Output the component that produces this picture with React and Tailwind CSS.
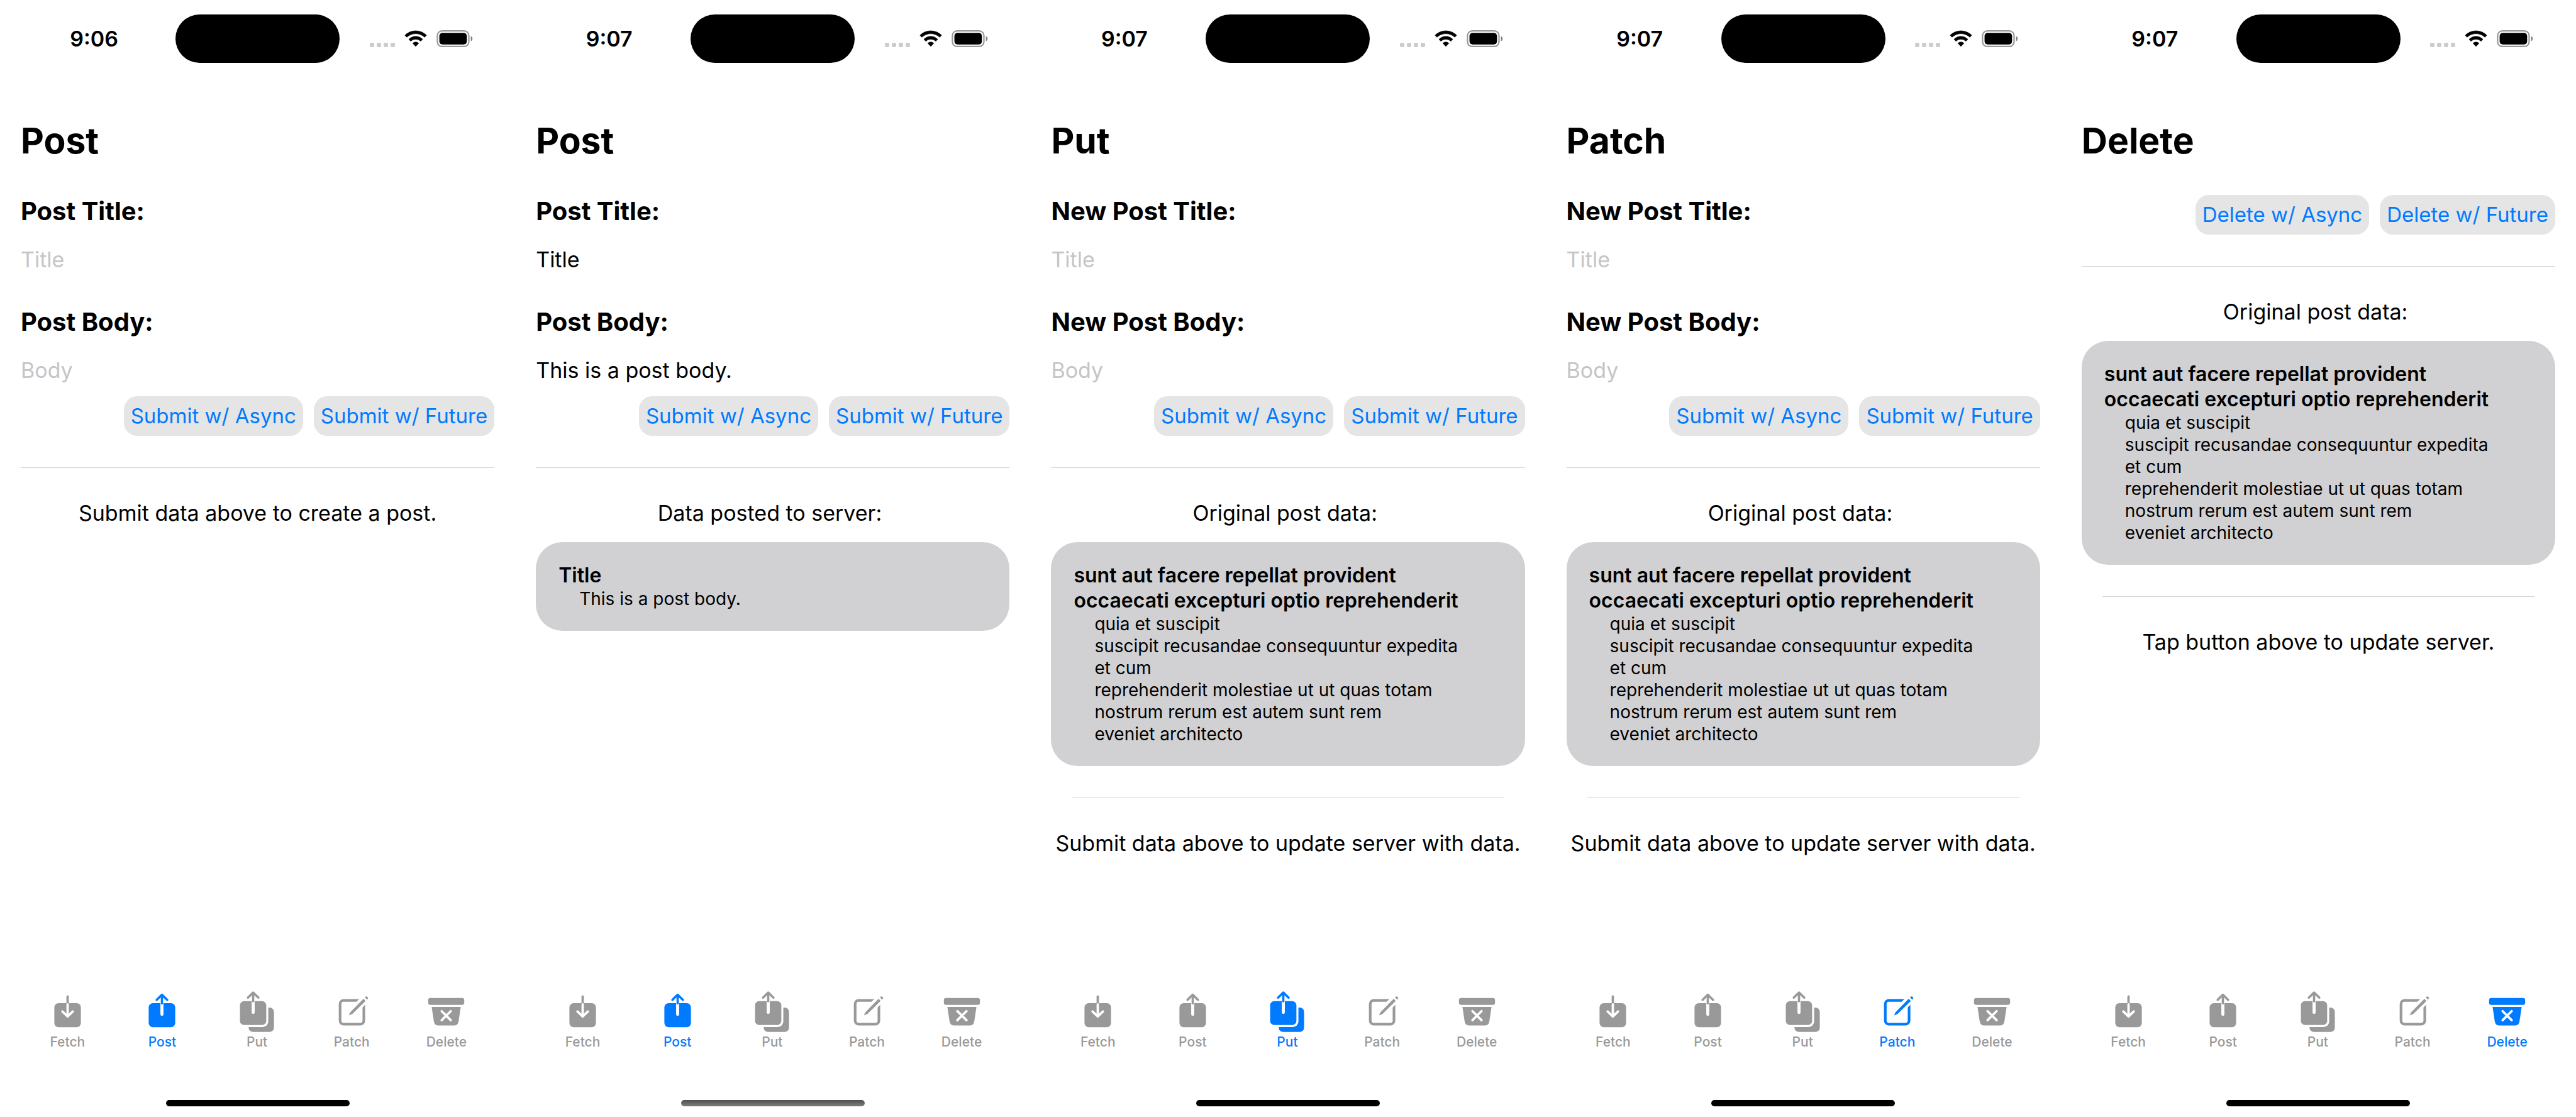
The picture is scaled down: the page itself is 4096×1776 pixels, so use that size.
import React from "react";

const ORIGINAL = {
  title: "sunt aut facere repellat provident\noccaecati excepturi optio reprehenderit",
  body: "quia et suscipit\nsuscipit recusandae consequuntur expedita\net cum\nreprehenderit molestiae ut ut quas totam\nnostrum rerum est autem sunt rem\neveniet architecto",
};

const SCREENS = [
  {
    id: "post-empty",
    time: "9:06",
    heading: "Post",
    active: "Post",
    fields: ["Post Title:", "Post Body:"],
    values: ["", ""],
    verb: "Submit",
    message: "Submit data above to create a post.",
  },
  {
    id: "post-sent",
    time: "9:07",
    heading: "Post",
    active: "Post",
    fields: ["Post Title:", "Post Body:"],
    values: ["Title", "This is a post body."],
    verb: "Submit",
    message: "Data posted to server: ",
    card: { title: "Title", body: "This is a post body." },
    dimIndicator: true,
  },
  {
    id: "put",
    time: "9:07",
    heading: "Put",
    active: "Put",
    fields: ["New Post Title:", "New Post Body:"],
    values: ["", ""],
    verb: "Submit",
    message: "Original post data: ",
    card: ORIGINAL,
    footer: "Submit data above to update server with data.",
  },
  {
    id: "patch",
    time: "9:07",
    heading: "Patch",
    active: "Patch",
    fields: ["New Post Title:", "New Post Body:"],
    values: ["", ""],
    verb: "Submit",
    message: "Original post data: ",
    card: ORIGINAL,
    footer: "Submit data above to update server with data.",
  },
  {
    id: "delete",
    time: "9:07",
    heading: "Delete",
    active: "Delete",
    verb: "Delete",
    message: "Original post data: ",
    card: ORIGINAL,
    footer: "Tap button above to update server.",
  },
];

function TabIcon({ children }) {
  return (
    <svg viewBox="-54 0 108 108" className="size-[75px]" fill="currentColor" aria-hidden="true">
      {children}
    </svg>
  );
}

function FetchIcon() {
  return (
    <TabIcon>
      <rect x="-30.4" y="36" width="60.8" height="55" rx="9.5" />
      <g fill="none" strokeWidth="5.4" strokeLinecap="round" strokeLinejoin="round">
        <path d="M0 20.7V38" stroke="currentColor" />
        <path d="M0 38.7V66M-12 55L0 66.6L12 55" stroke="white" />
      </g>
    </TabIcon>
  );
}

function PostIcon() {
  return (
    <TabIcon>
      <rect x="-30.4" y="36" width="60.8" height="55" rx="9.5" />
      <g fill="none" strokeLinecap="round" strokeLinejoin="round">
        <path d="M0 37V61.5" stroke="white" strokeWidth="7" />
        <path d="M0 17V36.5M-12 28.5L0 16.7L12 28.5" stroke="currentColor" strokeWidth="5.2" />
      </g>
    </TabIcon>
  );
}

function PutIcon() {
  return (
    <TabIcon>
      <rect x="-19" y="46" width="58" height="56" rx="10" />
      <rect x="-43" y="27" width="69" height="63.7" rx="13" fill="white" />
      <rect x="-38.8" y="31.3" width="60.2" height="54.8" rx="9.5" />
      <g fill="none" strokeLinecap="round" strokeLinejoin="round">
        <path d="M-8.6 32V57.2" stroke="white" strokeWidth="7" />
        <path d="M-8.6 12V31.5M-20.6 23.5L-8.6 11.7L3.4 23.5" stroke="currentColor" strokeWidth="5.2" />
      </g>
    </TabIcon>
  );
}

function PatchIcon() {
  return (
    <TabIcon>
      <path
        d="M20 29.7H-19a8 8 0 0 0-8 8V76a8 8 0 0 0 8 8H19.4a8 8 0 0 0 8-8V36"
        fill="none"
        stroke="currentColor"
        strokeWidth="6"
      />
      <path d="M9 47.8L38 18.8" stroke="white" strokeWidth="19" />
      <path d="M-7 64.2L-4 57.4L26.6 26L31.4 30.8L1 61Z" />
      <path d="M29.8 23.2L31.2 21.4a3.7 3.7 0 0 1 5.2 5L34.6 27.8Z" />
    </TabIcon>
  );
}

function DeleteIcon() {
  return (
    <TabIcon>
      <rect x="-41.3" y="24" width="82.6" height="16" rx="5" />
      <path d="M-33.3 44.7H33.3L28.4 77Q26.8 87 18.8 87H-18.8Q-26.8 87-28.4 77Z" />
      <path d="M-10.4 54.3L10.4 75M10.4 54.3L-10.4 75" stroke="white" strokeWidth="5.4" strokeLinecap="round" />
    </TabIcon>
  );
}

const TABS = [
  { name: "Fetch", Icon: FetchIcon },
  { name: "Post", Icon: PostIcon },
  { name: "Put", Icon: PutIcon },
  { name: "Patch", Icon: PatchIcon },
  { name: "Delete", Icon: DeleteIcon },
];

function StatusBar({ time }) {
  return (
    <div className="grid grid-cols-[1fr_261px_1fr] items-center pt-[23px]">
      <time className="pl-5 text-center text-[34px] leading-10 font-semibold">{time}</time>
      <div className="h-[77px] rounded-full bg-black" />
      <div className="flex items-end justify-center pr-5">
        <div className="flex gap-1">
          <span className="size-[7px] rounded-[2px] bg-[#cccccc]" />
          <span className="size-[7px] rounded-[2px] bg-[#cccccc]" />
          <span className="size-[7px] rounded-[2px] bg-[#cccccc]" />
          <span className="size-[7px] rounded-[2px] bg-[#cccccc]" />
        </div>
        <svg viewBox="0 0 51 39" className="ml-[15px] h-[27px] w-[36px]" aria-hidden="true">
          <g stroke="black" strokeWidth="1" strokeLinejoin="round">
            <path d="M.7 11.7A35 35 0 0 1 50.3 11.7L46 16.2A30 30 0 0 0 5 16.2Z" />
            <path d="M9.6 21A22 22 0 0 1 41.4 21L37 25.2A17 17 0 0 0 14 25.2Z" />
            <path d="M18.6 30A10 10 0 0 1 32.4 30L25.5 37.3Z" />
          </g>
        </svg>
        <svg viewBox="0 0 83 39" className="ml-[15px] h-[27px] w-[58px]" aria-hidden="true">
          <rect x="1.6" y="1.6" width="72.4" height="35.8" rx="11" fill="none" stroke="#999999" strokeWidth="3.2" />
          <rect x="6.2" y="6.2" width="63.2" height="26.6" rx="7" />
          <path d="M78.5 13.2a7 7 0 0 1 0 12.6Z" fill="#808080" />
        </svg>
      </div>
    </div>
  );
}

function Field({ id, label, value, placeholder }) {
  return (
    <div className="mb-[53px] flex flex-col gap-[31px] last:mb-[21px]">
      <label htmlFor={id} className="text-[40px] leading-[52px] font-bold">
        {label}
      </label>
      <input
        id={id}
        type="text"
        defaultValue={value}
        placeholder={placeholder}
        className="w-full min-w-0 text-[34px] leading-10 outline-none placeholder:text-[#c5c5c7]"
      />
    </div>
  );
}

function ActionButton({ children }) {
  return (
    <button type="button" className="rounded-[21px] bg-[#e5e5e5] px-[11px] py-3 text-[33px] leading-[39px] whitespace-nowrap text-[#007aff]">
      {children}
    </button>
  );
}

function PostCard({ title, body }) {
  return (
    <article className="mt-[26px] rounded-[42px] bg-[#d1d1d3] px-9 py-[33px]">
      <h3 className="text-[32px] leading-10 font-semibold whitespace-pre-line">{title}</h3>
      <p className="pl-[33px] text-[28px] leading-[35px] whitespace-pre-line">{body}</p>
    </article>
  );
}

function Screen({ screen }) {
  return (
    <section className="flex min-w-0 flex-col">
      <StatusBar time={screen.time} />
      <main className="flex flex-col px-[33px] pt-[90px]">
        <h2 className="text-[57px] leading-[68px] font-bold">{screen.heading}</h2>
        <form className="mt-[52px] flex flex-col" onSubmit={(e) => e.preventDefault()}>
          {screen.fields && (
            <div>
              <Field id={`${screen.id}-title`} label={screen.fields[0]} value={screen.values[0]} placeholder="Title" />
              <Field id={`${screen.id}-body`} label={screen.fields[1]} value={screen.values[1]} placeholder="Body" />
            </div>
          )}
          <div className="flex justify-end gap-[17px]">
            <ActionButton>{screen.verb} w/ Async</ActionButton>
            <ActionButton>{screen.verb} w/ Future</ActionButton>
          </div>
        </form>
        <hr className="mt-[50px] mb-[52px] border-[#d4d4d5]" />
        <p className="text-center text-[34px] leading-10 whitespace-pre">{screen.message}</p>
        {screen.card && <PostCard title={screen.card.title} body={screen.card.body} />}
        {screen.footer && (
          <>
            <hr className="mx-[33px] mt-[50px] mb-[52px] border-[#d4d4d5]" />
            <p className="text-center text-[34px] leading-10 whitespace-nowrap">{screen.footer}</p>
          </>
        )}
      </main>
      <nav className="mt-auto grid grid-cols-5 pr-[34px] pl-8">
        {TABS.map(({ name, Icon }) => (
          <button
            key={name}
            type="button"
            aria-current={name === screen.active ? "page" : undefined}
            className={
              name === screen.active
                ? "flex flex-col items-center text-[#007aff]"
                : "flex flex-col items-center text-[#999999]"
            }
          >
            <Icon />
            <span className="text-[21px] leading-6 font-medium">{name}</span>
          </button>
        ))}
      </nav>
      <div className="flex justify-center pt-20 pb-[17px]">
        <div
          className={
            screen.dimIndicator
              ? "h-[10px] w-[292px] rounded-full bg-linear-to-b from-[#505050] to-[#7e7e7e]"
              : "h-[10px] w-[292px] rounded-full bg-black"
          }
        />
      </div>
    </section>
  );
}

export default function App() {
  return (
    <div className="grid min-h-screen grid-cols-5 bg-white font-['Inter',sans-serif] text-black">
      {SCREENS.map((screen) => (
        <Screen key={screen.id} screen={screen} />
      ))}
    </div>
  );
}
